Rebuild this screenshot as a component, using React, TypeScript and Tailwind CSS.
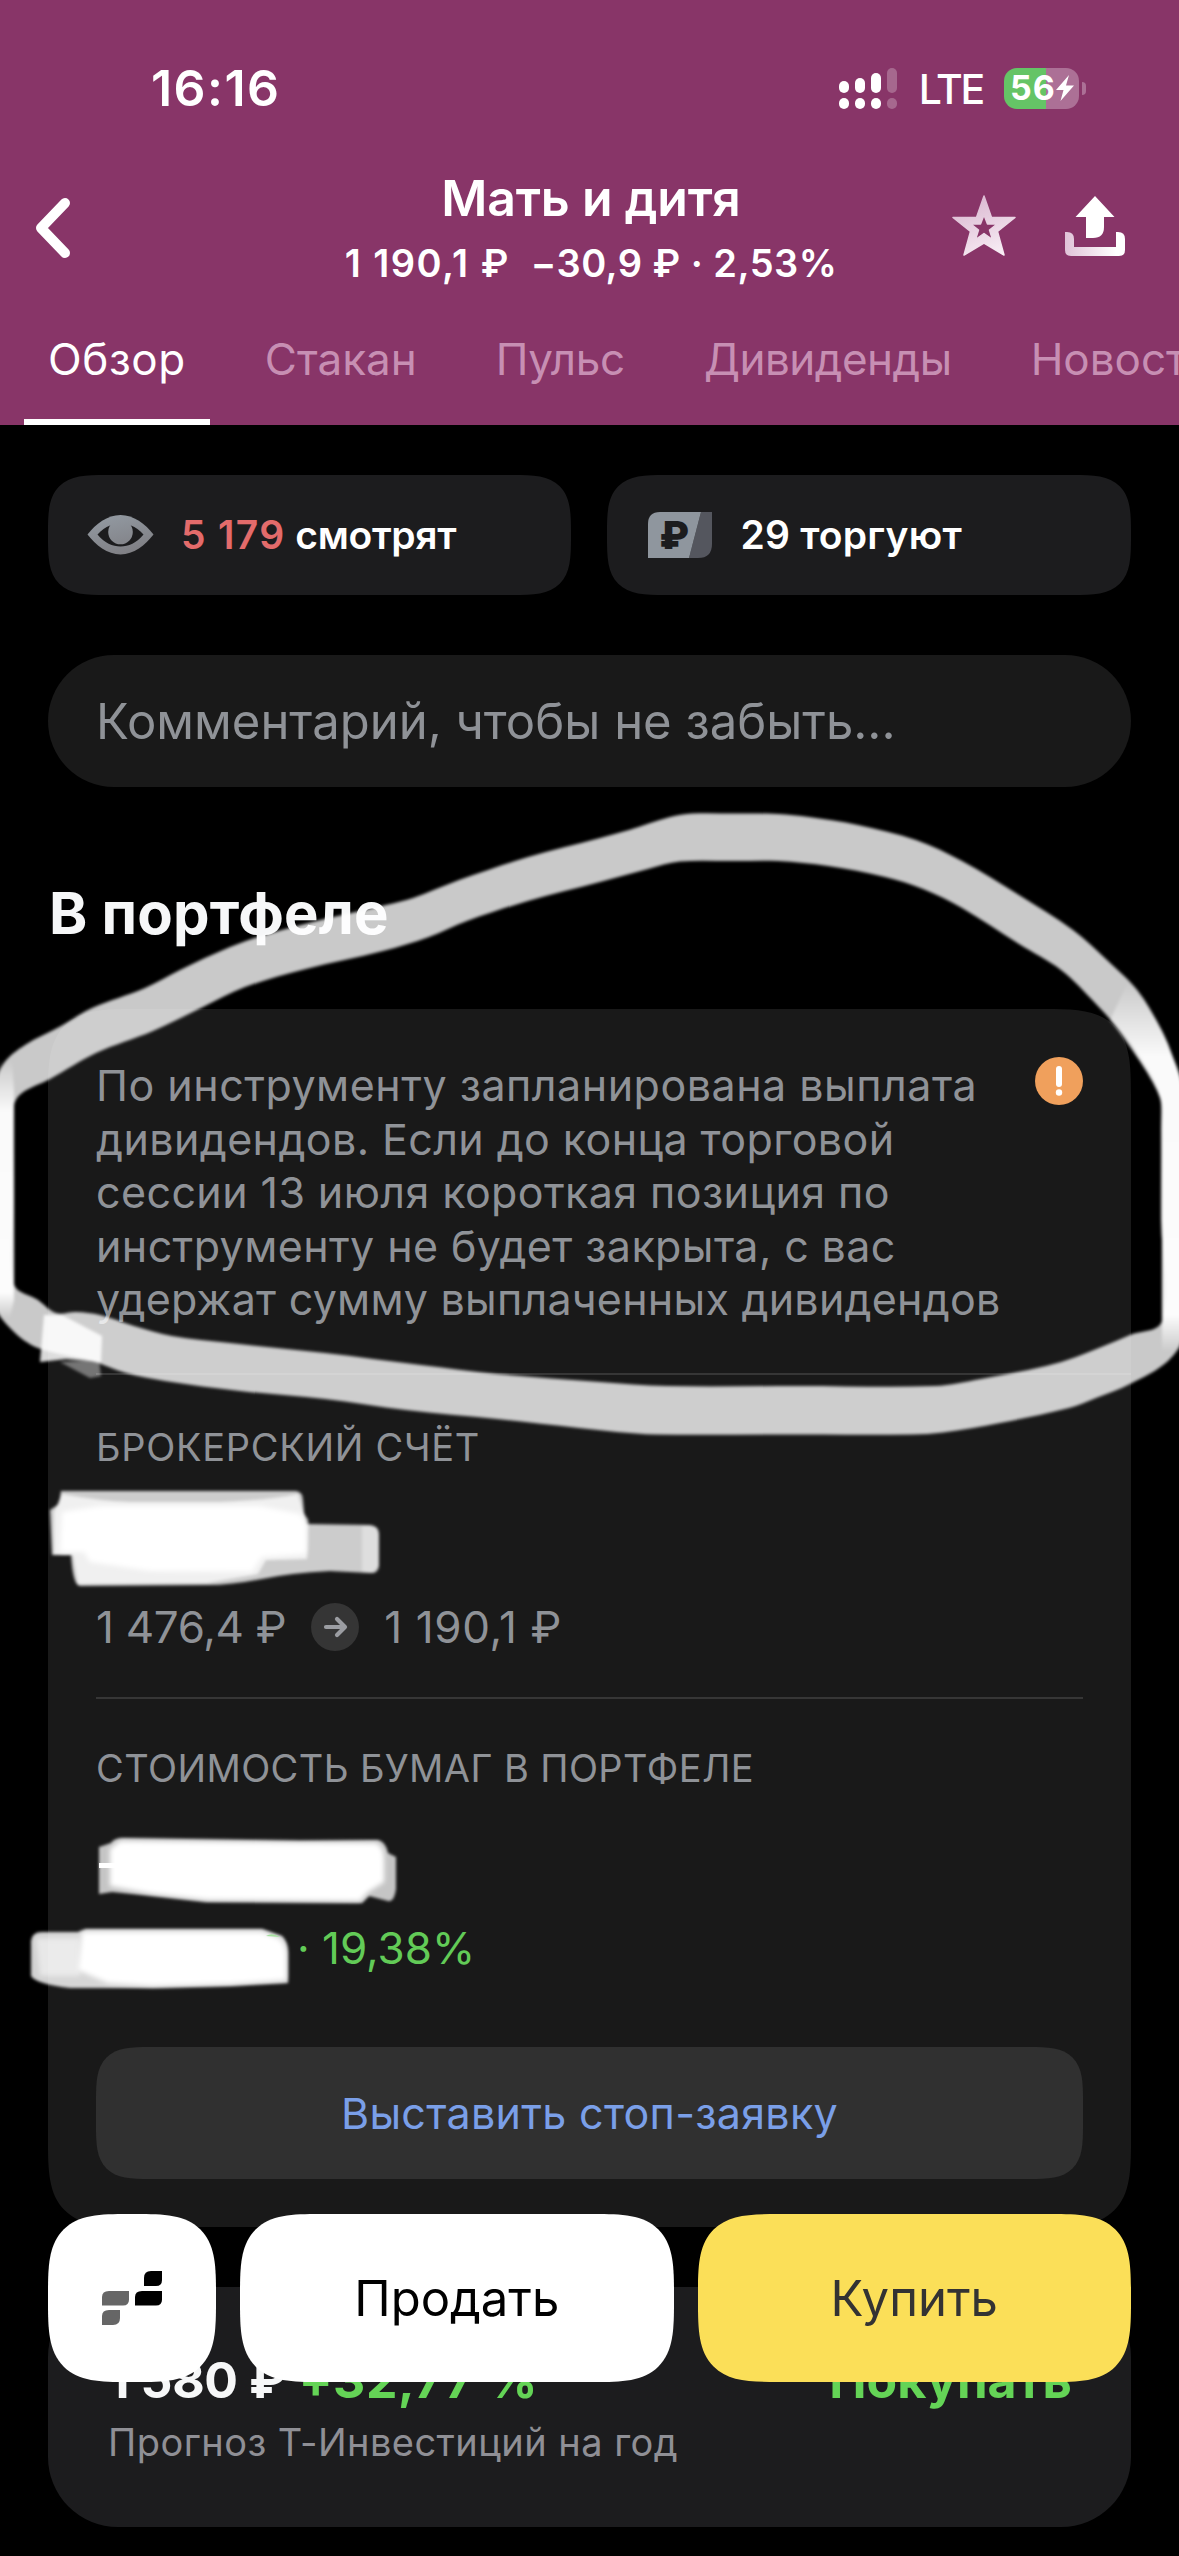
const TABS = [
  { label: 'Обзор', className: 'border-white tracking-[0.6px] text-white' },
  { label: 'Стакан', className: 'border-transparent text-[#c78fb3]' },
  { label: 'Пульс', className: 'border-transparent tracking-[-0.3px] text-[#c78fb3]' },
  { label: 'Дивиденды', className: 'border-transparent tracking-[-0.5px] text-[#c78fb3]' },
  { label: 'Новости', className: 'border-transparent text-[#c78fb3]' },
];

const NOTICE_LINES = [
  { text: 'По инструменту запланирована выплата', className: 'tracking-[0.5px]' },
  { text: 'дивидендов. Если до конца торговой', className: 'tracking-[0.4px]' },
  { text: 'сессии 13 июля короткая позиция по', className: 'tracking-[0.4px]' },
  { text: 'инструменту не будет закрыта, с вас', className: 'tracking-[0.4px]' },
  { text: 'удержат сумму выплаченных дивидендов', className: 'tracking-[0.24px]' },
];

const SIGNAL_BARS = [
  { x: 0, y: 13, on: true },
  { x: 16, y: 10, on: true },
  { x: 32, y: 5, on: true },
  { x: 48, y: 0, on: false },
];

type Point = [number, number];

// Outer and inner edges of the marker loop
const LOOP_OUTER: Point[] = [
  [-4, 1085], [4, 1063], [25, 1045], [61, 1026], [92, 1008], [145, 988], [180, 970], [230, 947], [268, 934], [325, 919],
  [386, 905], [413, 898], [459, 880], [528, 857], [600, 838], [629, 830], [670, 817], [692, 813.5], [735, 813.5], [778, 814],
  [809, 817], [858, 825], [916, 840], [962, 861], [1019, 895], [1073, 930], [1107, 960], [1138, 991], [1161, 1029],
  [1174, 1060], [1183, 1090], [1184, 1210], [1183, 1335], [1168, 1361], [1130, 1384], [1096, 1398], [1069, 1408],
  [1000, 1423], [943, 1432.5], [912, 1434.5], [780, 1434.5], [656, 1434.5], [617, 1432], [579, 1428], [497, 1419],
  [406, 1410], [325, 1399], [240, 1391], [165, 1381], [126, 1373], [92, 1361], [38, 1348], [12, 1330], [-4, 1305],
];

const LOOP_INNER: Point[] = [
  [14, 1106], [22, 1093], [50, 1079], [96, 1053], [153, 1031], [203, 1007], [245, 987], [306, 969], [383, 951],
  [429, 937], [467, 921], [528, 901], [600, 882], [648, 869], [680, 861.5], [735, 861], [778, 861], [828, 866], [885, 877],
  [923, 889], [962, 908], [1019, 944], [1061, 970], [1096, 1004], [1126, 1038], [1149, 1071], [1160, 1096], [1161, 1130],
  [1161, 1220], [1162, 1321], [1130, 1335], [1076, 1357], [1046, 1366], [981, 1379], [935, 1386], [800, 1386], [667, 1386],
  [600, 1382], [497, 1374], [421, 1365], [325, 1353], [230, 1343], [172, 1336], [134, 1326], [100, 1315], [76, 1312],
  [56, 1313], [38, 1300], [14, 1284], [14, 1200],
];

// Closed Catmull-Rom curve through the points
function smoothPath(points: Point[]) {
  const n = points.length;
  const segments = points.map((p1, i) => {
    const p0 = points[(i - 1 + n) % n];
    const p2 = points[(i + 1) % n];
    const p3 = points[(i + 2) % n];
    const len = Math.hypot(p2[0] - p1[0], p2[1] - p1[1]);
    const handle = (a: Point, b: Point) => {
      const d = Math.hypot(b[0] - a[0], b[1] - a[1]) || 1;
      return [((b[0] - a[0]) / d) * len * 0.33, ((b[1] - a[1]) / d) * len * 0.33];
    };
    const h1 = handle(p0, p2);
    const h2 = handle(p1, p3);
    return `C${p1[0] + h1[0]} ${p1[1] + h1[1]} ${p2[0] - h2[0]} ${p2[1] - h2[1]} ${p2[0]} ${p2[1]}`;
  });
  return `M${points[0][0]} ${points[0][1]} ${segments.join(' ')} Z`;
}

function SignalIcon() {
  return (
    <svg width="58" height="41" viewBox="0 0 58 41" fill="#fff">
      {SIGNAL_BARS.map(bar => (
        <g key={bar.x} opacity={bar.on ? 1 : 0.25}>
          <rect x={bar.x} y={bar.y} width="10" height={25 - bar.y} rx="5" />
          <rect x={bar.x} y="30" width="10" height="11" rx="5" />
        </g>
      ))}
    </svg>
  );
}

function Battery() {
  return (
    <div className="flex items-center gap-[3px]">
      <div className="flex h-[41px] w-[75px] items-center overflow-hidden rounded-[13px] bg-[linear-gradient(90deg,#65c466_56%,#ac7096_56%)] pl-[6px]">
        <span className="text-[34px] leading-none font-bold tracking-[1px]">56</span>
        <svg width="18" height="26" viewBox="0 0 18 26" fill="#fff" className="shrink-0">
          <path d="M13 0 L0 15 H7.5 L4.5 26 L18 10.5 H10 Z" />
        </svg>
      </div>
      <div className="h-[13px] w-[4px] rounded-r-full bg-[#ac7096]" />
    </div>
  );
}

function StarIcon() {
  return (
    <svg width="66" height="63" viewBox="0 0 66 63">
      <defs>
        <linearGradient id="star" gradientUnits="userSpaceOnUse" x1="20" y1="0" x2="45" y2="62">
          <stop offset="0" stopColor="#d9b5cf" />
          <stop offset="1" stopColor="#f8eef5" />
        </linearGradient>
      </defs>
      <path
        d="M33 2 L40.5 23.5 H64 L46.5 37.5 L53 61 L33 49 L13 61 L19.500 37.500 L2 23.500 H25.500 Z M33 21 L29.500 30 H20 L27.500 36 L24.500 45.500 L33 39.500 L41.500 45.500 L38.500 36 L46 30 H36.500 Z"
        fill="url(#star)"
        stroke="url(#star)"
        strokeWidth="1.500"
        strokeLinejoin="round"
        fillRule="evenodd"
      />
    </svg>
  );
}

function ShareIcon() {
  return (
    <svg width="60" height="60" viewBox="0 0 60 60">
      <defs>
        <linearGradient id="tray" x1="0" y1="0" x2="1" y2="0">
          <stop offset="0" stopColor="#e0c3d8" />
          <stop offset="0.85" stopColor="#fff" />
        </linearGradient>
      </defs>
      <path d="M30 0 L49.500 21 H39 V31 Q39 42 28 42 H21 V21 H10.500 Z" fill="#fff" />
      <path d="M0 36 H2 Q9 36 9 43 V51 H51 V36 H53 Q60 36 60 43 V54 Q60 60 54 60 H6 Q0 60 0 54 Z" fill="url(#tray)" />
    </svg>
  );
}

function EyeIcon() {
  return (
    <svg width="67" height="40" viewBox="0 0 66 40" className="shrink-0">
      <defs>
        <linearGradient id="eye" gradientUnits="userSpaceOnUse" x1="20" y1="0" x2="30" y2="40">
          <stop offset="0" stopColor="#9299a1" />
          <stop offset="1" stopColor="#808085" />
        </linearGradient>
      </defs>
      <path d="M0 19.500 C8 9 20 0 33 0 S58 9 66 19.500 C58 30 46 39.500 33 39.500 S8 30 0 19.500 Z" fill="url(#eye)" />
      <path d="M10 19.500 C14 15 18 12 22.500 10.500 H43.500 C48 12 52 15 56 19.500 C49 28 41 31.500 33 31.500 S17 28 10 19.500 Z" fill="#1c1c1e" />
      <circle cx="33" cy="17" r="12.300" fill="url(#eye)" />
    </svg>
  );
}

function BanknoteIcon() {
  return (
    <svg width="64" height="46" viewBox="0 0 64 46" className="shrink-0">
      <path d="M53 0 H64 V32 Q64 46 50 46 H41 Z" fill="#54565e" />
      <path d="M12 0 H53 L41 46 H0 V12 Q0 0 12 0 Z" fill="#8f969e" />
      <text x="26" y="37" textAnchor="middle" fontFamily="Inter, sans-serif" fontSize="38" fontWeight="900" fill="#1c1c1e">
        ₽
      </text>
    </svg>
  );
}

function TerminalIcon() {
  return (
    <svg width="60" height="54" viewBox="0 0 60 54">
      <path d="M49 0 H60 V9 Q60 15 54 15 H42 V7 Q42 0 49 0 Z" fill="#000" />
      <path d="M40 20 H60 V28.500 Q60 34.500 54 34.500 H33 V26 Q33 20 40 20 Z" fill="#000" />
      <path d="M7 20 H27 V28.500 Q27 34.500 21 34.500 H0 V26 Q0 20 7 20 Z" fill="#666" />
      <path d="M7 39 H18 V47 Q18 54 11 54 H0 V45 Q0 39 7 39 Z" fill="#666" />
    </svg>
  );
}

// Freehand marker drawn over the whole screen
function Marker() {
  return (
    <svg className="pointer-events-none absolute inset-0 z-20" width="1179" height="2556" viewBox="0 0 1179 2556">
      <defs>
        <filter id="soft" x="-5%" y="-5%" width="110%" height="110%">
          <feGaussianBlur stdDeviation="1.8" />
        </filter>
        <filter id="softer" x="-20%" y="-20%" width="140%" height="140%">
          <feGaussianBlur stdDeviation="2.6" />
        </filter>
        <linearGradient id="side" x1="0" y1="0" x2="0" y2="1">
          <stop offset="0" stopColor="#fff" stopOpacity="0" />
          <stop offset="0.2" stopColor="#fff" stopOpacity="0.9" />
          <stop offset="0.9" stopColor="#fff" stopOpacity="0.95" />
          <stop offset="1" stopColor="#fff" stopOpacity="0" />
        </linearGradient>
      </defs>

      <g filter="url(#soft)">
        <path fill="#fff" fillOpacity="0.79" fillRule="evenodd" d={`${smoothPath(LOOP_OUTER)} ${smoothPath(LOOP_INNER)}`} />
        <path d="M99 1360 L101 1376 L90 1378 L60 1362 Z" fill="#fff" fillOpacity="0.4" />
        <path d="M-4 1060 H12 L14 1090 V1300 L10 1318 H-4 Z" fill="url(#side)" />
        <path d="M1128 982 Q1160 1018 1172 1055 Q1183 1080 1184 1100 V1352 L1162 1350 V1105 Q1158 1082 1110 1020 Z" fill="url(#side)" />
        <path d="M44 1315 H62 L102 1336 L101 1362 L66 1359 L40 1362 Z" fill="#fff" fillOpacity="0.85" />
      </g>

      {/* Balance */}
      <g filter="url(#soft)">
        <path d="M61 1491 H296 Q303 1492 303 1500 L305 1524 L370 1525 Q379 1526 379 1534 V1566 Q378 1574 370 1573 L330 1571 Q290 1573 262 1579 Q230 1585 207 1585 L80 1586 Q73 1586 71 1555 H52 L50 1510 L59 1504 Z" fill="#fff" fillOpacity="0.78" />
        <path d="M362 1526 H372 Q379 1528 379 1534 V1566 L372 1573 L362 1572 Z" fill="#fff" fillOpacity="0.35" />
        <path d="M62 1494 Q100 1501 130 1502 H220 Q270 1500 298 1494 L303 1512 L308 1520 L307 1559 L266 1560 L258 1574 L207 1583 L78 1584 L73 1555 H54 V1512 Z" fill="#fff" fillOpacity="0.7" />
      </g>
      <path d="M62 1512 L100 1506 H260 L300 1514 L306 1522 V1554 L262 1557 L252 1572 L150 1571 L90 1562 L84 1552 H60 Z" fill="#fff" filter="url(#softer)" />

      {/* Securities value */}
      <path d="M99 1847 L111 1843 Q114 1838 124 1838 L300 1841 L378 1840 Q386 1842 388 1853 L396 1857 V1889 Q394 1903 388 1901 L369 1896 L362 1903 L207 1902 L153 1896 L112 1892 L99 1894 Z" fill="#fff" fillOpacity="0.75" filter="url(#soft)" />
      <path d="M110 1849 L120 1841 L376 1843 Q384 1846 384 1860 V1882 L368 1892 L360 1901 L207 1900 L153 1894 L110 1886 Z" fill="#fff" filter="url(#softer)" />
      <path d="M99 1863 H120 V1868 H99 Z" fill="#fff" />

      {/* Profit */}
      <path d="M31 1941 Q32 1932 42 1932 H78 L86 1929 H262 L282 1936 Q288 1942 288 1952 V1983 L230 1986 L153 1988 L70 1988 Q36 1984 31 1976 Z" fill="#fff" fillOpacity="0.82" filter="url(#soft)" />
      <path d="M36 1938 H80 V1976 H40 Z" fill="#fff" fillOpacity="0.5" filter="url(#softer)" />
      <path d="M82 1932 H262 L280 1939 Q286 1946 286 1954 V1980 L230 1984 L153 1986 L108 1983 L78 1970 Z" fill="#fff" filter="url(#softer)" />
      <path d="M266 1936 Q272 1932 280 1937 Z" fill="#a5e09f" />
    </svg>
  );
}

export default function App() {
  return (
    <div className="relative flex h-[2556px] w-[1179px] flex-col overflow-hidden bg-black font-['Inter','Liberation_Sans',sans-serif] text-white">
      <header className="h-[425px] shrink-0 bg-[#883568]">
        {/* Status bar */}
        <div className="flex h-[168px] items-center justify-between pt-2 pr-[93px] pl-[151px]">
          <span className="text-[50px] leading-none font-semibold tracking-[1.45px]">16:16</span>
          <div className="flex items-center">
            <SignalIcon />
            <span className="mt-[2px] mr-[21px] ml-[22px] text-[41px] leading-none font-medium tracking-[-2.2px]">LTE</span>
            <Battery />
          </div>
        </div>

        {/* Title */}
        <div className="grid h-[119px] grid-cols-[1fr_auto_1fr] items-center pr-[54px] pl-[35px]">
          <svg width="36" height="60" viewBox="0 0 36 60" fill="none" stroke="#fff" strokeWidth="10" strokeLinecap="round" strokeLinejoin="round">
            <path d="M30 5 L6 30 L30 55" />
          </svg>
          <div className="relative left-[11px] flex flex-col items-center">
            <h1 className="text-[50px] leading-[60px] font-[570] tracking-[-0.2px]">Мать и дитя</h1>
            <p className="mt-[11px] flex gap-[21px] text-[38px] leading-[48px] font-[570] whitespace-nowrap">
              <span className="tracking-[1.45px]">1 190,1 ₽</span>
              <span className="tracking-[0.46px]">−30,9 ₽ · 2,53%</span>
            </p>
          </div>
          <div className="relative -top-[2px] flex items-center justify-end gap-12">
            <StarIcon />
            <ShareIcon />
          </div>
        </div>

        {/* Tabs */}
        <nav className="flex h-[138px] gap-[31px] pl-6 text-[44px] whitespace-nowrap">
          {TABS.map(tab => (
            <a key={tab.label} className={`flex shrink-0 items-center border-b-[6px] px-6 pt-3 ${tab.className}`}>
              {tab.label}
            </a>
          ))}
        </nav>
      </header>

      <main className="flex flex-col px-12 pt-[50px]">
        <div className="flex gap-9 text-[39px] font-semibold">
          <div className="flex h-[120px] flex-1 items-center gap-[27px] rounded-[58px] bg-[#1c1c1e] pl-[39px] [corner-shape:superellipse(1.68)]">
            <EyeIcon />
            <p>
              <span className="tracking-[1.3px] text-[#e36b6b]">5 179</span> <span className="tracking-[-0.3px]">смотрят</span>
            </p>
          </div>
          <div className="flex h-[120px] flex-1 items-center gap-[29px] rounded-[58px] bg-[#1c1c1e] pl-[41px] [corner-shape:superellipse(1.68)]">
            <BanknoteIcon />
            <p className="tracking-[0.2px]">29 торгуют</p>
          </div>
        </div>

        <div className="mt-[60px] flex h-[132px] items-center rounded-full bg-[#191919] pt-[2px] pl-12 text-[49px] text-[#8f9297]">
          Комментарий, чтобы не забыть...
        </div>

        <h2 className="mt-[92px] pl-px text-[58px] leading-[68px] font-bold tracking-[0.2px] text-[#f6f7f8]">В портфеле</h2>

        <section className="mt-[62px] h-[1218px] rounded-[86px] bg-[#191919] px-12 pt-[50px] text-[#8f9297] [corner-shape:superellipse(1.68)]">
          <div className="flex items-start justify-between">
            <p className="text-[43px] leading-[53.6px] whitespace-nowrap">
              {NOTICE_LINES.map(line => (
                <span key={line.text} className={`block ${line.className}`}>
                  {line.text}
                </span>
              ))}
            </p>
            <svg width="48" height="48" viewBox="0 0 48 48" className="-mt-[2px] -ml-10 shrink-0">
              <circle cx="24" cy="24" r="24" fill="#f0a05c" />
              <rect x="21" y="9" width="6" height="21" rx="3" fill="#fff" />
              <circle cx="24" cy="35.500" r="3.200" fill="#fff" />
            </svg>
          </div>

          <div className="mt-[46px] -mr-12 h-[2px] bg-[#363636]" />

          <h3 className="mt-[49px] text-[38px] leading-[46px] font-[440] tracking-[0.7px]">БРОКЕРСКИЙ СЧЁТ</h3>
          <div className="mt-[130px] flex h-[54px] items-center text-[44px]">
            <span className="tracking-[-0.3px]">1 476,4 ₽</span>
            <svg width="48" height="48" viewBox="0 0 48 48" className="mx-[25px] shrink-0">
              <circle cx="24" cy="24" r="24" fill="#353535" />
              <path d="M15 24 H33 M26 16 L34 24 L26 32" fill="none" stroke="#9b9da2" strokeWidth="4.200" strokeLinecap="round" strokeLinejoin="round" />
            </svg>
            <span className="tracking-[0.6px]">1 190,1 ₽</span>
          </div>

          <div className="mt-[43px] h-[2px] bg-[#363636]" />

          <h3 className="mt-[46px] text-[38px] leading-[46px] font-[440] tracking-[0.4px]">СТОИМОСТЬ БУМАГ В ПОРТФЕЛЕ</h3>
          <p className="mt-[130px] pl-[201px] text-[44px] leading-[54px] tracking-[0px] text-[#62cb57]">· 19,38%</p>

          <button className="mt-[72px] flex h-[132px] w-full items-center justify-center rounded-[54px] bg-[#303030] text-[43px] tracking-[0.3px] text-[#7a9fe8] [corner-shape:superellipse(1.68)]">
            Выставить стоп-заявку
          </button>
        </section>

        <section className="mt-[60px] h-[240px] rounded-[70px] bg-[#1c1c1e] pt-[63px] pr-[59px] pl-[60px]">
          <div className="flex text-[50px] leading-[60px] font-bold whitespace-nowrap">
            <span className="tracking-[-0.4px] text-[#f6f7f8]">1 580 ₽</span>
            <span className="ml-[13px] tracking-[0.6px] text-[#64d456]">+32,77 %</span>
            <span className="ml-auto text-[#64d456]">Покупать</span>
          </div>
          <p className="mt-[9px] text-[38px] leading-[46px] tracking-[0.45px] text-[#8f8f95]">Прогноз Т-Инвестиций на год</p>
        </section>
      </main>

      {/* Floating trade actions */}
      <div className="absolute inset-x-12 top-[2214px] z-10 flex h-[168px] gap-6 text-[49px]">
        <button className="flex w-[168px] items-center justify-center rounded-[80px] bg-white [corner-shape:superellipse(1.68)]">
          <TerminalIcon />
        </button>
        <button className="flex-1 rounded-[80px] bg-white pt-[2px] text-black [corner-shape:superellipse(1.68)]">Продать</button>
        <button className="flex-1 rounded-[80px] bg-[#fbdf58] pt-[2px] text-[#333] [corner-shape:superellipse(1.68)]">Купить</button>
      </div>

      <Marker />
    </div>
  );
}
